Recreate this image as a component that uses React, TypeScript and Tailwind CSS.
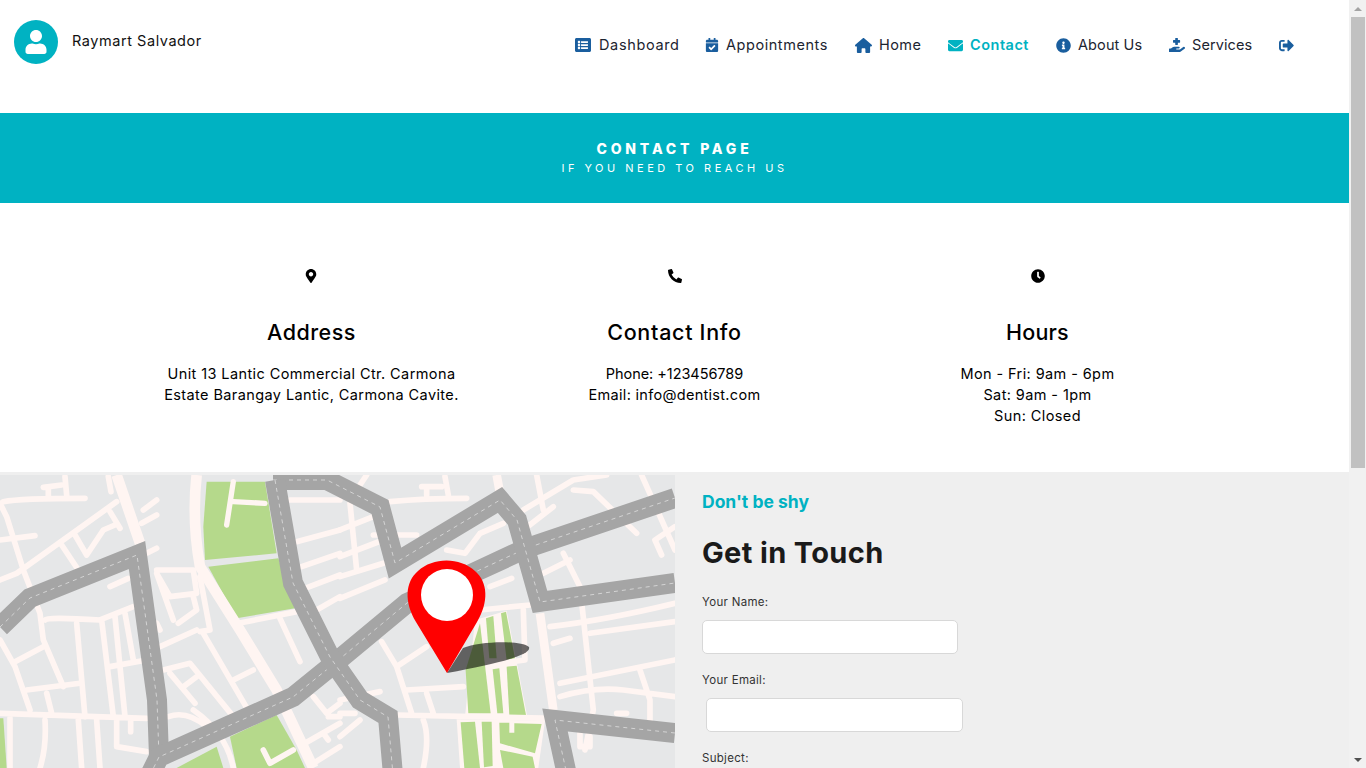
import { FaListAlt, FaCalendarCheck, FaEnvelope, FaInfoCircle, FaHandHoldingMedical, FaSignOutAlt, FaUser, FaMapMarkerAlt, FaPhoneAlt, FaClock } from "react-icons/fa";
import { FaHouse } from "react-icons/fa6";

const nav = [
  { I: FaListAlt, s: 16, label: "Dashboard", w: "w-[79px] ml-[1px] tracking-[0.65px]" },
  { I: FaCalendarCheck, s: 14, label: "Appointments", w: "w-[102px] tracking-[0.55px]" },
  { I: FaHouse, s: 17, label: "Home", w: "w-[42px] tracking-[0.45px]" },
  { I: FaEnvelope, s: 15, label: "Contact", w: "w-[59px] tracking-[0.5px]", active: true },
  { I: FaInfoCircle, s: 15, label: "About Us", w: "w-[64px] tracking-[0.1px]" },
  { I: FaHandHoldingMedical, s: 16, label: "Services", w: "w-[60px] tracking-[0.1px]" },
];

const minorA = [
  "M130 52L185 45M145 55L145 80M195 20L200 75M10 95Q60 85 255 85M325 20L333 65",
  "M0 100L20 140L70 300L120 430L130 510L190 650M0 210L105 197M0 330L50 310L350 95M185 225L235 300",
  "M225 195L260 255L310 180L345 165M330 125L360 175M430 120L470 90M425 160L470 135M440 250L470 235M330 350L385 325",
  "M135 450Q140 440 300 450L400 410M230 460L255 740M305 450L340 740M345 440L375 740M375 430L400 570M330 590L440 570",
  "M0 510L45 590L90 720M45 575L130 530M80 660L240 640M140 670L155 730M0 730L440 745M30 745L30 894M135 750Q140 830 120 894M235 750L245 894M290 750L300 894M350 750L350 830L440 845M392 750L392 785",
  "M470 300L580 300L590 370L510 380L470 310L520 450M580 380L590 420L535 460M600 320L630 480L600 485M480 480L470 460M480 530L590 480M610 490L750 730M700 630L760 600",
  "M490 600L570 580L700 740M510 610L585 700M550 650L590 620M505 740Q560 720 620 770M580 720Q680 790 700 894",
  "M870 90L1020 90M890 215L1020 180M905 290L1020 250M915 355L1020 315M950 420L1020 380M715 460L890 425M840 445L900 575",
  "M940 680L980 730L1020 700M985 740L1020 740M915 820L1020 760M970 790L985 810M940 880L1020 830M790 840L810 880L880 840",
];
const minorB = [
  "M150 95Q250 85 380 85M245 50L305 50M260 55L260 75M315 20L325 75M0 260L130 210M0 180L100 140M0 320L130 280M0 385L135 330M30 100L50 300M80 15L50 60M100 195L230 195",
  "M320 240L375 250L420 190L490 160M550 120L700 30L800 15M550 180L640 110M700 60L760 65L890 190M905 15L1005 240M945 210L965 255M945 210L1005 170M610 310L690 270M670 250L720 350L760 720L735 840M450 350L515 325",
  "M630 470Q800 450 1005 400M640 520L690 505M750 490L1005 455M660 640L1005 570M660 680Q760 650 850 660L1005 680M900 600L930 690L930 770",
  "M125 515L170 590L215 730M170 590L260 530M200 660L370 650M260 670L280 730M170 735L640 745M250 750Q270 800 250 894M420 420L570 405M550 420L555 570L480 580M0 730L45 730M0 800L60 750M0 690L120 665M830 730L860 730M720 790L720 830L750 830L750 800M590 15L610 120",
];

const roads = [
  "M0 152L30 123L137 80L157 225L159 282",
  "M150 300L159 282L293 222L330 192L407 128L473 98L527 73L675 23",
  "M273 5L327 5L380 32L395 88L500 25L517 45L540 127L675 108",
  "M275 5L293 108L330 182L360 225L388 242L393 300",
  "M675 258L555 245L567 300",
];

function MapArt() {
  return (
    <svg viewBox="0 0 675 293" className="block w-full h-full" preserveAspectRatio="none">
      <rect width="675" height="293" fill="#e6e7e8" />
      <g transform="translate(0,-5) scale(0.3333)">
        <path d="M0 745L10 745L20 894L0 894Z" fill="#b5d98b" />
        <path d="M620 35L795 35L830 250L615 270L610 170Z" fill="#b5d98b" />
        <path d="M625 290L835 265L885 415L710 445Z" fill="#b5d98b" />
        <path d="M530 894L650 830L670 894Z" fill="#b5d98b" />
        <path d="M690 800L830 735L890 840L915 894L710 894Z" fill="#b5d98b" />
        <path d="M350 15L420 220M590 15Q575 150 600 290L720 480L830 660L940 894" stroke="#fff5f2" strokeWidth="32" fill="none" />
        <path d="M700 35L680 165M700 95L795 100" stroke="#fff5f2" strokeWidth="16" strokeLinecap="round" fill="none" />
        {minorA.map((d) => (
          <path key={d} d={d} stroke="#fff5f2" strokeWidth="17" strokeLinecap="round" strokeLinejoin="round" fill="none" />
        ))}
      </g>
      <g transform="translate(340,-5) scale(0.3333)">
        <path d="M405 450L500 422L562 740L375 740Z" fill="#fff5f2" />
        <path d="M350 748L615 752L595 894L360 894Z" fill="#fff5f2" />
        <path d="M420 460L452 730L385 730L377 600Z" fill="#b5d98b" />
        <path d="M438 445L460 438L470 565L448 565Z" fill="#b5d98b" />
        <path d="M458 598L478 595L490 730L472 730Z" fill="#b5d98b" />
        <path d="M483 430L498 425L525 565L500 570Z" fill="#b5d98b" />
        <path d="M500 590L530 587L558 735L508 735Z" fill="#b5d98b" />
        <path d="M362 757L405 755L420 894L373 894Z" fill="#b5d98b" />
        <path d="M425 755L455 755L458 888L432 892Z" fill="#b5d98b" />
        <path d="M478 758L508 758L508 788L523 788L523 760L605 762L585 850L480 820Z" fill="#b5d98b" />
        <path d="M480 840L578 860L585 894L490 894Z" fill="#b5d98b" />
        <path d="M470 15L480 70M600 430L640 720" stroke="#fff5f2" strokeWidth="26" fill="none" />
        {minorB.map((d) => (
          <path key={d} d={d} stroke="#fff5f2" strokeWidth="17" strokeLinecap="round" strokeLinejoin="round" fill="none" />
        ))}
      </g>
      {roads.map((d) => (
        <g key={d} fill="none" strokeLinejoin="miter">
          <path d={d} stroke="#a5a5a5" strokeWidth="20" />
          <path d={d} stroke="#d4d4d4" strokeWidth="1" strokeDasharray="4 4" />
        </g>
      ))}
      <path d="M447 198L463 173C480 166 520 165 529 172C532 180 500 188 447 198Z" fill="#000" fillOpacity="0.58" />
      <path d="M447 198L416 147C404 127 405 107 418 96C433 82 460 82 475 96C488 107 489 127 477 147Z" fill="#ff0000" />
      <circle cx="447" cy="120" r="26" fill="#fff" />
    </svg>
  );
}

export default function App() {
  return (
    <div className="flex h-screen overflow-hidden bg-[#efefef] font-['Inter','Liberation_Sans',sans-serif]">
      <div className="flex-1 min-w-0 flex flex-col">
        <header className="h-[113px] bg-white flex justify-between items-start pr-[55px]">
          <div className="flex items-center gap-[14px] pl-[14px] pt-[20px]">
            <div className="w-[44px] h-[44px] rounded-full bg-[#00b2c2] flex items-center justify-center text-white">
              <FaUser size={24} />
            </div>
            <span className="text-[14.5px] text-[#111] -mt-[2px] tracking-[0.55px]">Raymart Salvador</span>
          </div>
          <nav className="flex items-center gap-[27px] h-[28px] mt-[31px]">
            {nav.map(({ I, s, label, w, active }) => (
              <div key={label} className={`flex items-center gap-[7px] ${active ? "text-[#00b2c2]" : "text-[#1a5e9e]"}`}>
                <I size={s} />
                <span className={`${w} whitespace-nowrap text-[14.5px] ${active ? "font-semibold text-[#00b2c2]" : "text-[#1c2430]"}`}>{label}</span>
              </div>
            ))}
            <FaSignOutAlt size={15} className="text-[#1a5e9e]" />
          </nav>
        </header>

        <section className="h-[90px] bg-[#00b2c2] flex flex-col items-center justify-center text-white">
          <div className="text-[14px] leading-[20px] font-extrabold tracking-[3.8px] -mt-[1px]">CONTACT PAGE</div>
          <div className="text-[11px] leading-[16px] tracking-[3.5px] mt-[1px]">IF YOU NEED TO REACH US</div>
        </section>

        <section className="h-[269px] bg-white grid grid-cols-3 px-[130px] pt-[66px] text-center text-black">
          <div className="flex flex-col items-center">
            <FaMapMarkerAlt size={14} className="-ml-[1px]" />
            <h2 className="text-[21.5px] leading-[32px] font-medium mt-[33px] tracking-[0.5px]">Address</h2>
            <p className="text-[14.5px] leading-[21px] mt-[15px] tracking-[0.4px]">Unit 13 Lantic Commercial Ctr. Carmona<br />Estate Barangay Lantic, Carmona Cavite.</p>
          </div>
          <div className="flex flex-col items-center">
            <FaPhoneAlt size={14} />
            <h2 className="text-[21.5px] leading-[32px] font-medium mt-[33px] tracking-[0.7px]">Contact Info</h2>
            <p className="text-[14.5px] leading-[21px] mt-[15px] tracking-[0.3px]"><span className="tracking-[-0.05px]">Phone: +123456789</span><br />Email: info@dentist.com</p>
          </div>
          <div className="flex flex-col items-center">
            <FaClock size={14} />
            <h2 className="text-[21.5px] leading-[32px] font-medium mt-[33px] tracking-[0.2px]">Hours</h2>
            <p className="text-[14.5px] leading-[21px] mt-[15px] tracking-[0.4px]">Mon - Fri: 9am - 6pm<br />Sat: 9am - 1pm<br />Sun: Closed</p>
          </div>
        </section>

        <section className="mt-[3px] flex-1 min-h-0 flex">
          <div className="w-[675px] shrink-0">
            <MapArt />
          </div>
          <div className="flex-1 bg-[#efefef] pl-[27px] pt-[13px] overflow-hidden">
            <div className="text-[17.5px] leading-[27px] font-bold text-[#00b2c2]">Don&apos;t be shy</div>
            <h1 className="text-[29px] leading-[44px] font-bold text-[#1a1a1a] mt-[16px] tracking-[0.35px]">Get in Touch</h1>
            <label className="block text-[11.5px] leading-[17px] text-[#333] mt-[19px] tracking-[0.3px]">Your Name:</label>
            <input className="block w-[256px] h-[34px] mt-[9px] bg-white border border-[#d8d8d8] rounded-[5px]" />
            <label className="block text-[11.5px] leading-[17px] text-[#333] mt-[18px] tracking-[0.3px]">Your Email:</label>
            <input className="block w-[257px] h-[34px] mt-[9px] ml-[4px] bg-white border border-[#d8d8d8] rounded-[5px]" />
            <label className="block text-[11.5px] leading-[17px] text-[#333] mt-[18px] tracking-[0.3px]">Subject:</label>
          </div>
        </section>
      </div>

      <aside className="w-[17px] shrink-0 bg-[#f1f1f1] flex flex-col items-center">
        <div className="h-[17px] w-full flex items-center justify-center">
          <div className="w-0 h-0 border-l-[4px] border-r-[4px] border-b-[4px] border-l-transparent border-r-transparent border-b-[#a3a3a3]" />
        </div>
        <div className="w-[14px] ml-[1px] h-[451px] bg-[#c1c1c1]" />
        <div className="flex-1" />
        <div className="h-[17px] w-full flex items-center justify-center">
          <div className="w-0 h-0 border-l-[4px] border-r-[4px] border-t-[4px] border-l-transparent border-r-transparent border-t-[#505050]" />
        </div>
      </aside>
    </div>
  );
}
